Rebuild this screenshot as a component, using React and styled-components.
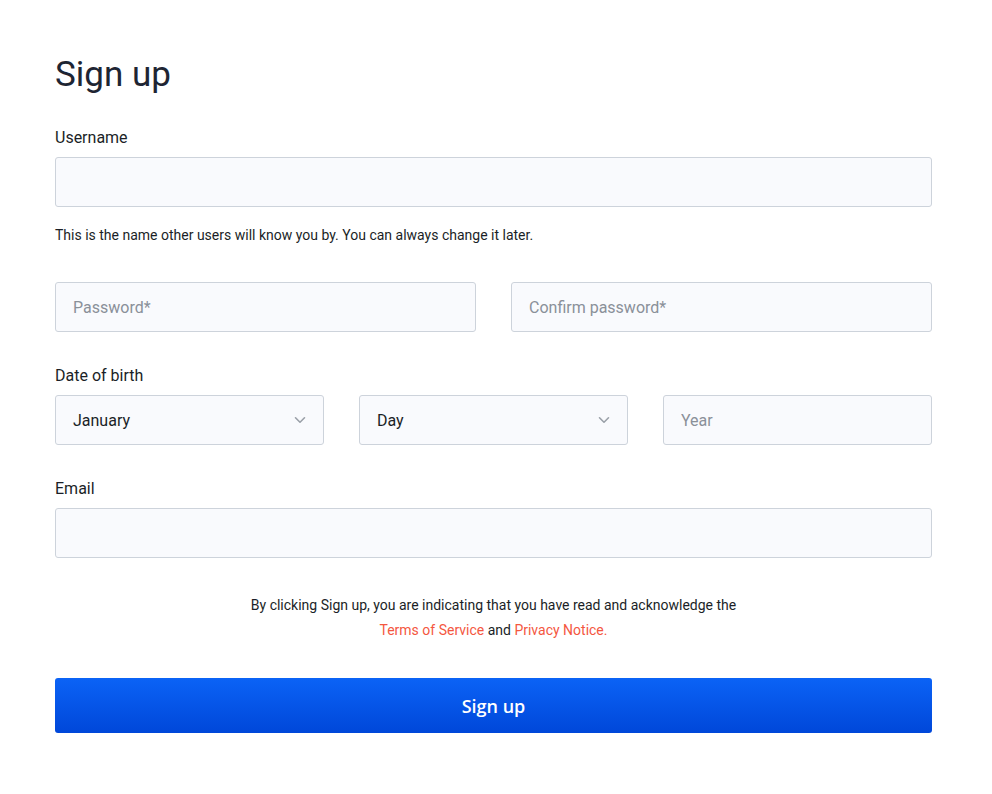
import React from 'react';
import styled, { createGlobalStyle } from 'styled-components';

const GlobalStyle = createGlobalStyle`
  body {
    margin: 0;
    background: #ffffff;
    font-family: Roboto, "Liberation Sans", sans-serif;
    color: #1b1f27;
  }
`;

const Page = styled.div`
  padding: 54px 60px 40px 55px;
`;

const Title = styled.h1`
  margin: 0 0 31px;
  font-size: 35px;
  line-height: 42px;
  font-weight: 400;
  color: #1e2533;
`;

const Field = styled.div`
  display: flex;
  flex-direction: column;
  margin-bottom: ${p => p.$mb || 0}px;
`;

const Label = styled.label`
  padding-top: 1px;
  font-size: 16px;
  line-height: 20px;
  margin-bottom: 9px;
  color: #1b1f27;
`;

const Hint = styled.p`
  margin: 19px 0 0;
  font-size: 14px;
  line-height: 18px;
  color: #1b1f27;
`;

const Input = styled.input`
  box-sizing: border-box;
  width: 100%;
  height: 50px;
  padding: 0 17px;
  border: 1px solid #cdd3db;
  border-radius: 3px;
  background: #f9fafd;
  font-family: Roboto, "Liberation Sans", sans-serif;
  font-size: 16px;
  color: #1b1f27;
  outline: none;

  &::placeholder {
    color: #8a9099;
  }
`;

const Row = styled.div`
  display: grid;
  grid-template-columns: repeat(${p => p.$cols}, 1fr);
  gap: 35px;
  margin-bottom: ${p => p.$mb || 0}px;
`;

const SelectBox = styled.div`
  box-sizing: border-box;
  height: 50px;
  padding: 0 17px;
  border: 1px solid #cdd3db;
  border-radius: 3px;
  background: #f9fafd;
  display: flex;
  align-items: center;
  justify-content: space-between;
  font-size: 16px;
  color: #1b1f27;
`;

const Chevron = () => (
  <svg width="12" height="8" viewBox="0 0 12 8" fill="none" stroke="#9aa0a8" strokeWidth="1.6" strokeLinecap="round" strokeLinejoin="round">
    <path d="M1.5 1.8 6 6.2l4.5-4.4" />
  </svg>
);

const Terms = styled.p`
  margin: 35px 0;
  text-align: center;
  font-size: 14px;
  line-height: 25px;
  color: #1b1f27;
`;

const Link = styled.a`
  color: #f4573f;
  text-decoration: none;
`;

const Button = styled.button`
  width: 100%;
  height: 55px;
  border: none;
  border-radius: 3px;
  background: linear-gradient(180deg, #0b63f6 0%, #0047d9 100%);
  color: #ffffff;
  font-family: "Open Sans", "Liberation Sans", sans-serif;
  font-weight: 600;
  font-size: 18px;
  cursor: pointer;
`;

export default function App() {
  return (
    <Page>
      <GlobalStyle />
      <Title>Sign up</Title>

      <Field $mb={38}>
        <Label>Username</Label>
        <Input type="text" />
        <Hint>This is the name other users will know you by. You can always change it later.</Hint>
      </Field>

      <Row $cols={2} $mb={33}>
        <Input type="password" placeholder="Password*" />
        <Input type="password" placeholder="Confirm password*" />
      </Row>

      <Field $mb={33}>
        <Label>Date of birth</Label>
        <Row $cols={3}>
          <SelectBox>January<Chevron /></SelectBox>
          <SelectBox>Day<Chevron /></SelectBox>
          <Input type="text" placeholder="Year" />
        </Row>
      </Field>

      <Field>
        <Label>Email</Label>
        <Input type="email" />
      </Field>

      <Terms>
        By clicking Sign up, you are indicating that you have read and acknowledge the
        <br />
        <Link href="#">Terms of Service</Link> and <Link href="#">Privacy Notice.</Link>
      </Terms>

      <Button>Sign up</Button>
    </Page>
  );
}
